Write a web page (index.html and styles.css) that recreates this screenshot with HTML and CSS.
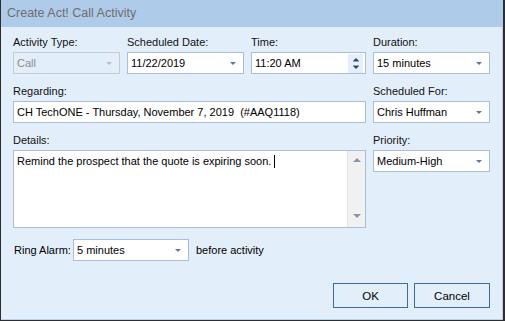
FILE: index.html
```html
<!DOCTYPE html>
<html lang="en">
<head>
    <meta charset="UTF-8">
    <meta name="viewport" content="width=device-width, initial-scale=1.0">
    <title>Create Act! Call Activity</title>
    <link rel="stylesheet" href="styles.css">
</head>
<body>
    <div class="window">
        <div class="titlebar">Create Act! Call Activity</div>
        <div class="content">
            <div class="form-grid">
                <div class="field">
                    <label>Activity Type:</label>
                    <div class="box combo disabled"><span>Call</span><span class="caret"></span></div>
                </div>
                <div class="field">
                    <label>Scheduled Date:</label>
                    <div class="box combo"><span>11/22/2019</span><span class="caret"></span></div>
                </div>
                <div class="field">
                    <label>Time:</label>
                    <div class="box spin">
                        <span>11:20 AM</span>
                        <span class="spinner"><span class="up"></span><span class="down"></span></span>
                    </div>
                </div>
                <div class="field">
                    <label>Duration:</label>
                    <div class="box combo"><span>15 minutes</span><span class="caret"></span></div>
                </div>

                <div class="field span3">
                    <label>Regarding:</label>
                    <div class="box"><span>CH TechONE - Thursday, November 7, 2019&nbsp; (#AAQ1118)</span></div>
                </div>
                <div class="field">
                    <label>Scheduled For:</label>
                    <div class="box combo"><span>Chris Huffman</span><span class="caret"></span></div>
                </div>

                <div class="field span3">
                    <label>Details:</label>
                    <div class="box memo">
                        <div class="memo-text">Remind the prospect that the quote is expiring soon. <span class="cursor"></span></div>
                        <div class="scrollbar"><span class="arrow-up"></span><span class="arrow-down"></span></div>
                    </div>
                </div>
                <div class="field">
                    <label>Priority:</label>
                    <div class="box combo"><span>Medium-High</span><span class="caret"></span></div>
                </div>
            </div>

            <div class="alarm-row">
                <label>Ring Alarm:</label>
                <div class="box combo alarm"><span>5 minutes</span><span class="caret"></span></div>
                <span>before activity</span>
            </div>

            <div class="actions">
                <button class="ok">OK</button>
                <button class="cancel">Cancel</button>
            </div>
        </div>
    </div>
</body>
</html>
```

FILE: styles.css
```css
body {
    margin: 0;
    font-family: "Liberation Sans", Arial, sans-serif;
    font-size: 11px;
    color: #000;
}
.window {
    width: 505px;
    height: 321px;
    box-sizing: border-box;
    border: 1px solid #2e2e2e;
    border-top: none;
    border-right-width: 2px;
    background-color: #e3eefb;
    display: flex;
    flex-direction: column;
}
.titlebar {
    height: 27px;
    background-color: #aecbe9;
    color: #6e6e6e;
    font-size: 12.5px;
    line-height: 27px;
    padding-left: 6px;
    flex-shrink: 0;
}
.content {
    flex: 1;
    padding: 7px 0 0 12px;
    border-right: 1px solid #b9d0ea;
    border-bottom: 1px solid #b9d0ea;
}
.form-grid {
    display: grid;
    grid-template-columns: 107px 117px 115px 117px;
    column-gap: 7px;
    row-gap: 9px;
    align-items: start;
}
.span3 {
    grid-column: span 3;
}
.field label {
    display: block;
    height: 16px;
    line-height: 16px;
    margin-bottom: 2px;
    color: #111;
}
.box {
    box-sizing: border-box;
    height: 22px;
    background-color: #fff;
    border: 1px solid #a9bfd9;
    display: flex;
    align-items: center;
    padding-left: 3px;
    white-space: nowrap;
    overflow: hidden;
}
.box > span:first-child {
    flex: 1;
}
.caret {
    width: 0;
    height: 0;
    border-left: 3px solid transparent;
    border-right: 3px solid transparent;
    border-top: 3px solid #5b7aa0;
    margin-right: 7px;
    margin-top: 1px;
}
.disabled {
    background-color: transparent;
    border-color: #c8ccd2;
    color: #8c8c8c;
}
.disabled .caret {
    border-top-color: #c6b6c6;
}
.spinner {
    width: 15px;
    height: 19px;
    margin-right: 2px;
    background-color: #e7eef7;
    display: flex;
    flex-direction: column;
    align-items: center;
    justify-content: center;
    gap: 5px;
}
.spinner .up {
    width: 0;
    height: 0;
    border-left: 3px solid transparent;
    border-right: 3px solid transparent;
    border-bottom: 3px solid #1d4c7c;
    box-shadow: 0 1px 0 #8aa3c0;
}
.spinner .down {
    width: 0;
    height: 0;
    border-left: 3px solid transparent;
    border-right: 3px solid transparent;
    border-top: 3px solid #1d4c7c;
    box-shadow: 0 -1px 0 #8aa3c0;
}
.memo {
    height: 78px;
    align-items: stretch;
    padding: 0 0 0 3px;
}
.memo-text {
    flex: 1;
    padding-top: 3px;
    line-height: 14px;
}
.cursor {
    display: inline-block;
    width: 1px;
    height: 13px;
    background-color: #000;
    vertical-align: -3px;
}
.scrollbar {
    width: 17px;
    background-color: #f1f1f1;
    border-left: 1px solid #e2e2e2;
    display: flex;
    flex-direction: column;
    align-items: center;
    justify-content: space-between;
    padding: 7px 0 9px;
}
.arrow-up {
    width: 0;
    height: 0;
    border-left: 4px solid transparent;
    border-right: 4px solid transparent;
    border-bottom: 4px solid #8796aa;
}
.arrow-down {
    width: 0;
    height: 0;
    border-left: 4px solid transparent;
    border-right: 4px solid transparent;
    border-top: 4px solid #8796aa;
}
.alarm-row {
    display: flex;
    align-items: center;
    margin-top: 11px;
    padding-left: 1px;
}
.alarm-row label {
    width: 59px;
}
.alarm {
    width: 116px;
    margin-right: 7px;
}
.actions {
    display: flex;
    gap: 6px;
    margin-top: 22px;
    padding-left: 320px;
}
.actions button {
    height: 25px;
    background-color: #e3eefb;
    border: 1px solid #3d6d9b;
    font-family: "Liberation Sans", Arial, sans-serif;
    font-size: 11.5px;
    color: #000;
    padding: 0;
}
.ok {
    width: 75px;
}
.cancel {
    width: 76px;
}
```
